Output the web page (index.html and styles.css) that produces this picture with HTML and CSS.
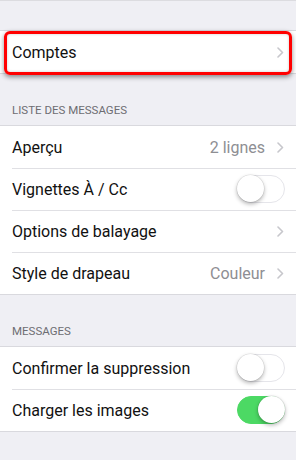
FILE: index.html
```html
<!DOCTYPE html>
<html lang="fr">
<head>
<meta charset="utf-8">
<link rel="stylesheet" href="styles.css">
</head>
<body>
<div class="page">
  <div class="group first">
    <div class="row">
      <span class="label">Comptes</span>
      <span class="right"><svg class="chev" viewBox="0 0 7 11"><polyline points="1,1 5.5,5.5 1,10"/></svg></span>
    </div>
    <div class="highlight"></div>
  </div>

  <div class="header">LISTE DES MESSAGES</div>
  <div class="group">
    <div class="row">
      <span class="label">Aperçu</span>
      <span class="right"><span class="value">2 lignes</span><svg class="chev" viewBox="0 0 7 11"><polyline points="1,1 5.5,5.5 1,10"/></svg></span>
    </div>
    <div class="row">
      <span class="label">Vignettes À / Cc</span>
      <span class="right"><span class="toggle"><span class="knob"></span></span></span>
    </div>
    <div class="row">
      <span class="label">Options de balayage</span>
      <span class="right"><svg class="chev" viewBox="0 0 7 11"><polyline points="1,1 5.5,5.5 1,10"/></svg></span>
    </div>
    <div class="row">
      <span class="label">Style de drapeau</span>
      <span class="right"><span class="value">Couleur</span><svg class="chev" viewBox="0 0 7 11"><polyline points="1,1 5.5,5.5 1,10"/></svg></span>
    </div>
  </div>

  <div class="header">MESSAGES</div>
  <div class="group">
    <div class="row">
      <span class="label">Confirmer la suppression</span>
      <span class="right"><span class="toggle"><span class="knob"></span></span></span>
    </div>
    <div class="row">
      <span class="label">Charger les images</span>
      <span class="right"><span class="toggle on"><span class="knob"></span></span></span>
    </div>
  </div>
</div>
</body>
</html>
```

FILE: styles.css
```css
html, body {
  margin: 0;
  padding: 0;
  background: #efeff4;
}
body {
  font-family: Roboto, "Liberation Sans", sans-serif;
  color: #000;
  width: 296px;
  height: 460px;
  overflow: hidden;
}
.page {
  border-top: 1px solid #dcdce0;
  padding-top: 29px;
}
.group {
  position: relative;
  background: #fff;
  border-top: 0.5px solid #d9d9de;
  border-bottom: 0.5px solid #d9d9de;
}
.row {
  height: 42px;
  display: flex;
  align-items: center;
  justify-content: space-between;
  padding: 0 12px;
  position: relative;
  font-size: 16px;
}
.row + .row::before {
  content: "";
  position: absolute;
  left: 12px;
  right: 0;
  top: 0;
  height: 1px;
  background: #e0e0e4;
}
.label {
  color: #111;
}
.right {
  display: flex;
  align-items: center;
  gap: 12px;
}
.value {
  color: #8e8e93;
}
.chev {
  width: 7px;
  height: 11px;
  fill: none;
  stroke: #c7c7cc;
  stroke-width: 1.6;
  stroke-linecap: round;
  stroke-linejoin: round;
}
.toggle {
  width: 48px;
  height: 28px;
  box-sizing: border-box;
  border-radius: 14px;
  border: 1.5px solid #e5e5ea;
  background: #fff;
  position: relative;
  margin-right: -1px;
}
.knob {
  position: absolute;
  left: -1px;
  top: -1px;
  width: 27px;
  height: 27px;
  border-radius: 50%;
  background: #fff;
  box-shadow: 0 2px 4px rgba(0,0,0,0.3), 0 0 0 0.5px rgba(0,0,0,0.1);
}
.toggle.on {
  background: #4cd964;
  border-color: #4cd964;
}
.toggle.on .knob {
  left: auto;
  right: -1px;
}
.highlight {
  position: absolute;
  left: 4px;
  right: 4px;
  top: 0;
  height: 44px;
  box-sizing: border-box;
  border: 3px solid #f00;
  border-radius: 6px;
  box-shadow: 0 2px 5px rgba(0,0,0,0.45), inset 0 0 3px rgba(0,0,0,0.2);
  pointer-events: none;
}
.header {
  font-size: 11.5px;
  color: #6d6d72;
  padding: 29px 12px 8px;
  line-height: 14px;
}
```
